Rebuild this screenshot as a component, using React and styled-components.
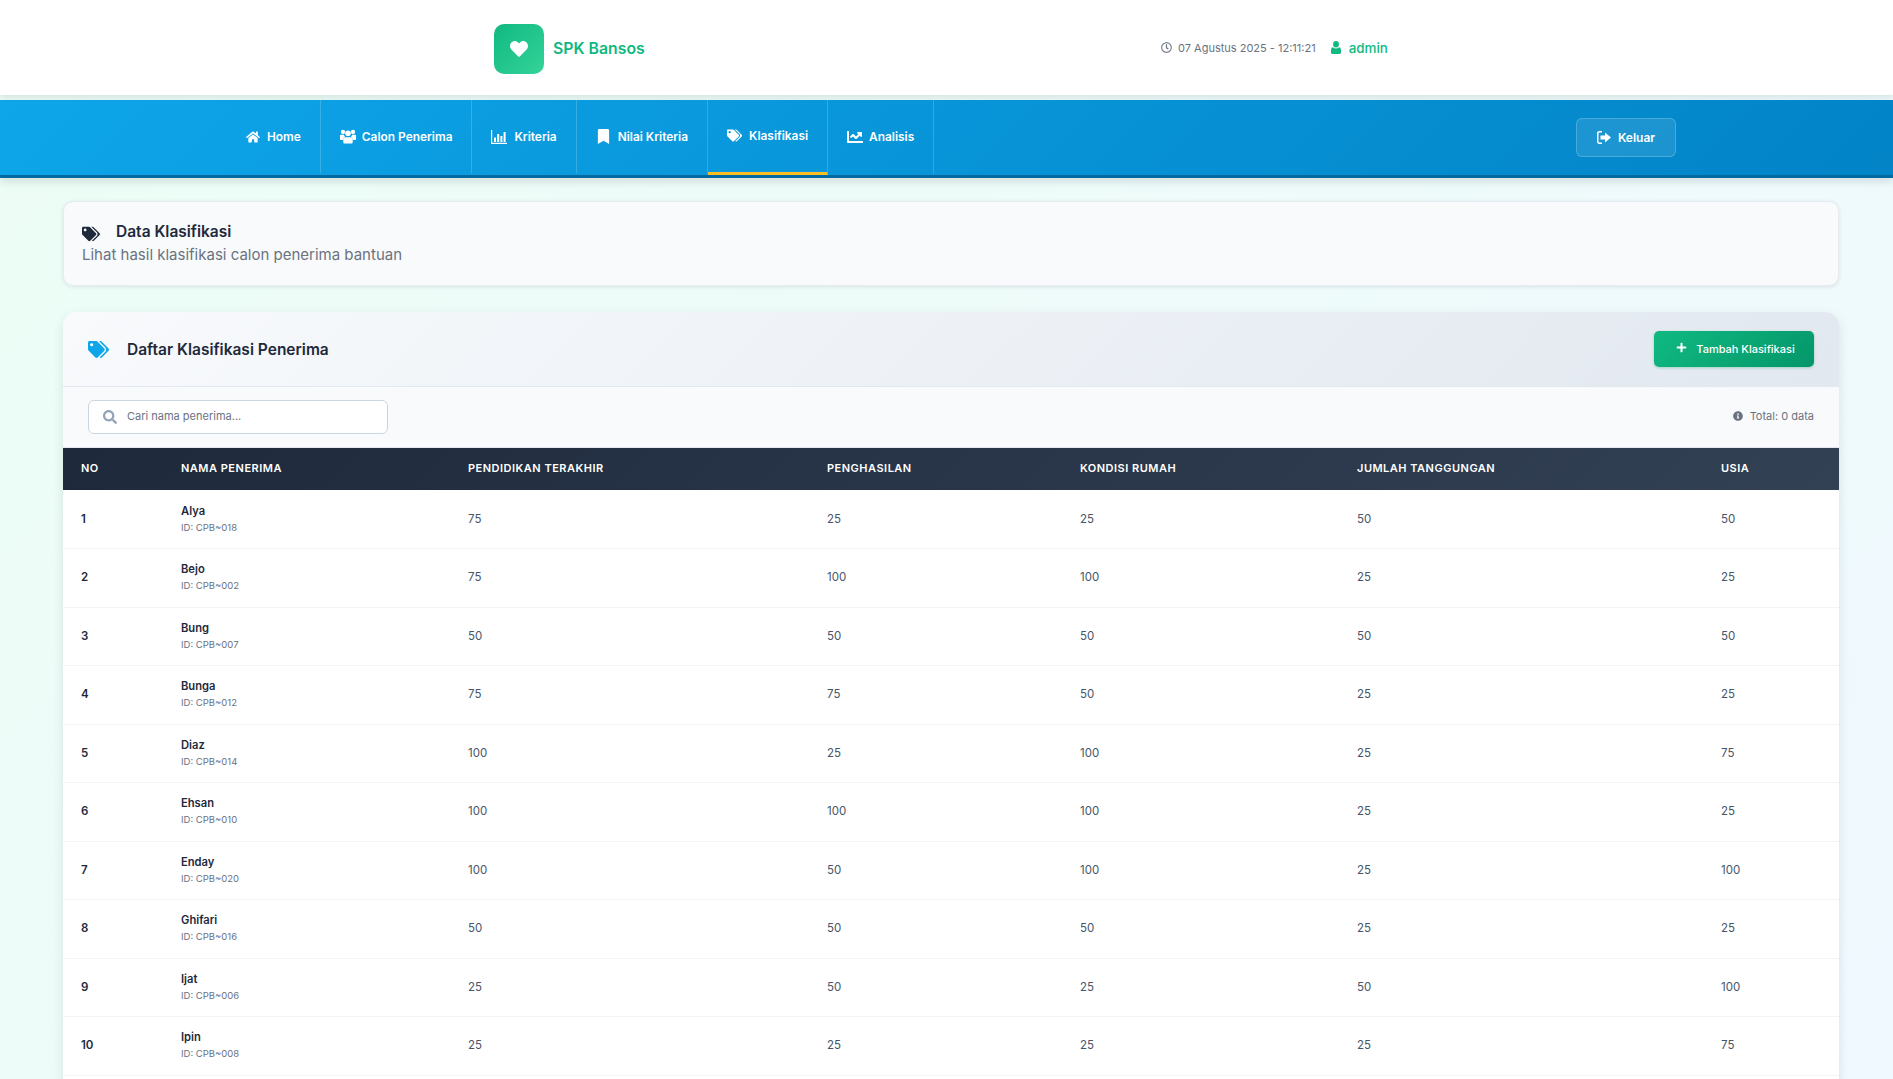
import React from 'react';
import styled, {createGlobalStyle} from 'styled-components';
import {
    FaHeart, FaRegClock, FaHome, FaBookmark, FaTags,
    FaChartLine, FaPlus, FaSearch, FaInfoCircle,
} from 'react-icons/fa';

const GlobalStyle = createGlobalStyle`
    * { box-sizing:border-box; }
    html, body { margin:0; padding:0; height:100%; overflow:hidden; }
    body {
        font-family:"Inter","Liberation Sans",sans-serif;
        background:linear-gradient(135deg,#ecfdf5 0%,#f0f9ff 100%);
        color:#1e293b;
    }
`;

const Page = styled.div`
    height:100vh;
    overflow:hidden;
`;

const TopBar = styled.header`
    height:95px;
    background:#fff;
    box-shadow:0 2px 6px rgba(15,23,42,.12);
    display:flex;
    align-items:center;
    padding:3px 0 0 494px;
    position:relative;
`;
const Brand = styled.div`
    display:flex;
    align-items:center;
    gap:9px;
    width:667px;
`;
const LogoBox = styled.div`
    width:50px;
    height:50px;
    border-radius:10px;
    background:linear-gradient(135deg,#10b981,#34d399);
    color:#fff;
    display:flex;
    align-items:center;
    justify-content:center;
    font-size:18px;
`;
const BrandName = styled.span`
    font-size:15.8px;
    font-weight:600;
    color:#10b981;
    margin-top:-1px;
`;
const TopInfo = styled.div`
    display:flex;
    align-items:center;
    gap:15px;
    margin-top:-3px;
`;
const DateText = styled.span`
    display:flex;
    align-items:center;
    gap:6px;
    font-size:11px;
    color:#6b7280;
`;
const UserName = styled.span`
    display:flex;
    align-items:center;
    gap:8px;
    font-size:13.4px;
    font-weight:500;
    color:#10b981;
`;

const NavBar = styled.nav`
    margin-top:5px;
    height:78px;
    background:linear-gradient(135deg,#0ea5e9 0%,#0284c7 100%);
    border-bottom:3px solid #0369a1;
    box-shadow:0 4px 8px rgba(15,23,42,.12);
    display:flex;
    justify-content:space-between;
    align-items:stretch;
    padding:0 217px 0 227px;
    position:relative;
`;
const NavList = styled.div`
    display:flex;
    align-items:stretch;
`;
const NavItem = styled.a`
    display:flex;
    align-items:center;
    gap:${props => props.$gap || 7}px;
    padding:${props => (props.$active ? '0 19px 1px' : '1px 19px 0')};
    font-size:11.9px;
    font-weight:600;
    color:#fff;
    border-right:1px solid rgba(255,255,255,.18);
    border-bottom:3px solid ${props => (props.$active ? '#fbbf24' : 'transparent')};
    svg { flex:none; }
`;
const LogoutButton = styled.button`
    align-self:center;
    width:100px;
    height:39px;
    border-radius:6px;
    border:1px solid rgba(255,255,255,.2);
    background:rgba(255,255,255,.1);
    color:#fff;
    font-family:inherit;
    font-size:12px;
    font-weight:600;
    display:flex;
    align-items:center;
    justify-content:center;
    gap:7px;
`;

const Content = styled.main`
    padding:23px 54px 0 63px;
`;
const TitleCard = styled.section`
    height:85px;
    background:#f8fafc;
    border:1px solid #e8ecf1;
    border-radius:10px;
    box-shadow:0 1px 4px rgba(15,23,42,.1);
    padding:18px 18px;
`;
const PageTitle = styled.h1`
    margin:0;
    display:flex;
    align-items:center;
    gap:16px;
    font-size:15.5px;
    line-height:23px;
    font-weight:600;
    color:#1e293b;
    svg { font-size:18px; margin-top:4px; }
`;
const PageSubtitle = styled.p`
    margin:1px 0 0;
    font-size:15px;
    line-height:22px;
    color:#6b7280;
`;

const TableCard = styled.section`
    margin-top:26px;
    background:#fff;
    border-radius:14px 14px 0 0;
    box-shadow:0 4px 12px rgba(15,23,42,.1);
    overflow:hidden;
    padding-bottom:30px;
`;
const CardHeader = styled.div`
    height:75px;
    display:flex;
    align-items:center;
    justify-content:space-between;
    padding:0 25px;
    background:linear-gradient(135deg,#f8fafc 0%,#e2e8f0 100%);
    border-bottom:1px solid #e2e8f0;
`;
const CardTitle = styled.h2`
    margin:0;
    display:flex;
    align-items:center;
    gap:18px;
    font-size:15.5px;
    font-weight:600;
    color:#1e293b;
    svg { font-size:21px; color:#0ea5e9; }
`;
const AddButton = styled.button`
    width:160px;
    height:36px;
    border:0;
    border-radius:5px;
    padding:0 0 0 3px;
    background:linear-gradient(135deg,#10b981,#059669);
    box-shadow:0 1px 3px rgba(5,150,105,.3);
    color:#fff;
    font-family:inherit;
    font-size:11px;
    font-weight:500;
    display:flex;
    align-items:center;
    justify-content:center;
    gap:9px;
    svg { font-size:11px; margin-top:-3px; }
`;
const Toolbar = styled.div`
    height:61px;
    background:#f8fafc;
    display:flex;
    align-items:center;
    justify-content:space-between;
    padding:0 25px;
    border-bottom:1px solid #e2e8f0;
`;
const SearchBox = styled.label`
    width:300px;
    height:34px;
    background:#fff;
    border:1px solid #cbd5e1;
    border-radius:6px;
    display:flex;
    align-items:center;
    gap:10px;
    padding:0 14px;
    svg { font-size:14px; color:#94a3b8; flex:none; }
`;
const SearchInput = styled.input`
    flex:1;
    min-width:0;
    border:0;
    outline:0;
    padding:0 0 2px;
    background:transparent;
    font-family:inherit;
    font-size:11px;
    color:#1e293b;
    &::placeholder { color:#6b7280; opacity:1; }
`;
const TotalText = styled.span`
    display:flex;
    align-items:center;
    gap:7px;
    margin-top:-2px;
    font-size:11px;
    color:#6b7280;
    svg { font-size:10px; }
`;

const Table = styled.table`
    width:100%;
    border-collapse:collapse;
    table-layout:fixed;
    thead tr { background:linear-gradient(135deg,#1e293b,#334155); }
`;
const Th = styled.th`
    height:42px;
    padding:0 0 2px 18px;
    text-align:left;
    font-size:11px;
    font-weight:600;
    letter-spacing:.5px;
    color:#fff;
    text-transform:uppercase;
`;
const Row = styled.tr`
    border-bottom:1px solid #f1f5f9;
`;
const NoCell = styled.td`
    height:58.5px;
    padding:0 0 1px 18px;
    font-size:11.5px;
    font-weight:600;
    color:#1e293b;
`;
const NameCell = styled.td`
    padding:0 0 1px 18px;
`;
const PersonName = styled.div`
    font-size:11.2px;
    line-height:16px;
    font-weight:600;
    color:#1e293b;
`;
const PersonId = styled.div`
    font-size:9.5px;
    line-height:14px;
    margin-top:2px;
    color:#6b7280;
`;
const ValueCell = styled.td`
    padding:0 0 1px 18px;
    font-size:11.5px;
    color:#475569;
`;

const columns = [
    {label:'No', width:100},
    {label:'Nama Penerima', width:287},
    {label:'Pendidikan Terakhir', width:359},
    {label:'Penghasilan', width:253},
    {label:'Kondisi Rumah', width:277},
    {label:'Jumlah Tanggungan', width:364},
    {label:'Usia', width:136},
];

const rows = [
    ['Alya', 'CPB~018', 75, 25, 25, 50, 50],
    ['Bejo', 'CPB~002', 75, 100, 100, 25, 25],
    ['Bung', 'CPB~007', 50, 50, 50, 50, 50],
    ['Bunga', 'CPB~012', 75, 75, 50, 25, 25],
    ['Diaz', 'CPB~014', 100, 25, 100, 25, 75],
    ['Ehsan', 'CPB~010', 100, 100, 100, 25, 25],
    ['Enday', 'CPB~020', 100, 50, 100, 25, 100],
    ['Ghifari', 'CPB~016', 50, 50, 50, 25, 25],
    ['Ijat', 'CPB~006', 25, 50, 25, 50, 100],
    ['Ipin', 'CPB~008', 25, 25, 25, 25, 75],
];

// the reference uses font awesome 4 glyphs, these ones differ too much in react-icons
const BarChartIcon = () => (
    <svg width="16" height="14" viewBox="0 0 16 14" fill="currentColor">
        <path d="M0 0h1.2v12.8H16V14H0z"/>
        <rect x="3" y="7.5" width="2" height="4.5"/>
        <rect x="6.2" y="4" width="2" height="8"/>
        <rect x="9.4" y="6" width="2" height="6"/>
        <rect x="12.6" y="2" width="2" height="10"/>
    </svg>
);

const UsersIcon = () => (
    <svg width="16" height="15" viewBox="0 0 17 15" fill="currentColor">
        <circle cx="3.2" cy="2.7" r="2.3"/>
        <circle cx="13.8" cy="2.7" r="2.3"/>
        <circle cx="8.5" cy="4" r="3"/>
        <path d="M0 6.5c0-.5.4-.9.9-.9h3.300c.1 1 .6 1.900 1.300 2.500-1.300.5-2.100 1.700-2.300 3H.8C.3 11.100 0 10.800 0 10.300z"/>
        <path d="M17 6.500c0-.5-.4-.9-.9-.9h-3.300c-.1 1-.6 1.900-1.300 2.500 1.300.5 2.100 1.700 2.300 3h2.400c.5 0 .8-.3.800-.8z"/>
        <path d="M5.800 8.200h5.400c1.300 0 2.300 1 2.300 2.300v3c0 .8-.7 1.500-1.500 1.500H5c-.8 0-1.500-.7-1.500-1.500v-3c0-1.300 1-2.300 2.300-2.300z"/>
    </svg>
);

const UserIcon = () => (
    <svg width="10" height="13" viewBox="0 0 10 13" fill="currentColor">
        <ellipse cx="5" cy="3.3" rx="2.9" ry="3.3"/>
        <path d="M2 6.200C2.800 7 3.800 7.400 5 7.400s2.200-.4 3-1.200c1.300.2 2 1.500 2 3.300v1.700c0 .9-.7 1.800-1.700 1.800H1.700C.7 13 0 12.100 0 11.200V9.500c0-1.800.7-3.100 2-3.300z"/>
    </svg>
);

const SignOutIcon = () => (
    <svg width="14" height="13" viewBox="0 0 14 13" fill="currentColor">
        <path d="M5 0v1.500H2.400c-.5 0-.9.4-.9.9v8.200c0 .5.4.9.9.9H5V13H2.200C1 13 0 12 0 10.800V2.200C0 1 1 0 2.200 0z"/>
        <path d="M8 1.500 14 6.500 8 11.500V8.500H3.500v-4H8z"/>
    </svg>
);

const App = () => (
    <Page>
        <GlobalStyle/>
        <TopBar>
            <Brand>
                <LogoBox><FaHeart/></LogoBox>
                <BrandName>SPK Bansos</BrandName>
            </Brand>
            <TopInfo>
                <DateText><FaRegClock size={11}/>07 Agustus 2025 - 12:11:21</DateText>
                <UserName><UserIcon/>admin</UserName>
            </TopInfo>
        </TopBar>
        <NavBar>
            <NavList>
                <NavItem><FaHome size={14}/>Home</NavItem>
                <NavItem $gap={6}><UsersIcon/>Calon Penerima</NavItem>
                <NavItem><BarChartIcon/>Kriteria</NavItem>
                <NavItem><FaBookmark size={15}/>Nilai Kriteria</NavItem>
                <NavItem $active><FaTags size={15}/>Klasifikasi</NavItem>
                <NavItem $gap={6}><FaChartLine size={16}/>Analisis</NavItem>
            </NavList>
            <LogoutButton><SignOutIcon/>Keluar</LogoutButton>
        </NavBar>
        <Content>
            <TitleCard>
                <PageTitle><FaTags/>Data Klasifikasi</PageTitle>
                <PageSubtitle>Lihat hasil klasifikasi calon penerima bantuan</PageSubtitle>
            </TitleCard>
            <TableCard>
                <CardHeader>
                    <CardTitle><FaTags/>Daftar Klasifikasi Penerima</CardTitle>
                    <AddButton><FaPlus/>Tambah Klasifikasi</AddButton>
                </CardHeader>
                <Toolbar>
                    <SearchBox>
                        <FaSearch/>
                        <SearchInput placeholder="Cari nama penerima..."/>
                    </SearchBox>
                    <TotalText><FaInfoCircle/>Total: 0 data</TotalText>
                </Toolbar>
                <Table>
                    <colgroup>
                        {columns.map(col => <col key={col.label} style={{width:col.width}}/>)}
                    </colgroup>
                    <thead>
                        <tr>
                            {columns.map(col => <Th key={col.label}>{col.label}</Th>)}
                        </tr>
                    </thead>
                    <tbody>
                        {rows.map(([name, id, ...values], index) => (
                            <Row key={id}>
                                <NoCell>{index + 1}</NoCell>
                                <NameCell>
                                    <PersonName>{name}</PersonName>
                                    <PersonId>ID: {id}</PersonId>
                                </NameCell>
                                {values.map((value, i) => <ValueCell key={i}>{value}</ValueCell>)}
                            </Row>
                        ))}
                    </tbody>
                </Table>
            </TableCard>
        </Content>
    </Page>
);

export default App;
